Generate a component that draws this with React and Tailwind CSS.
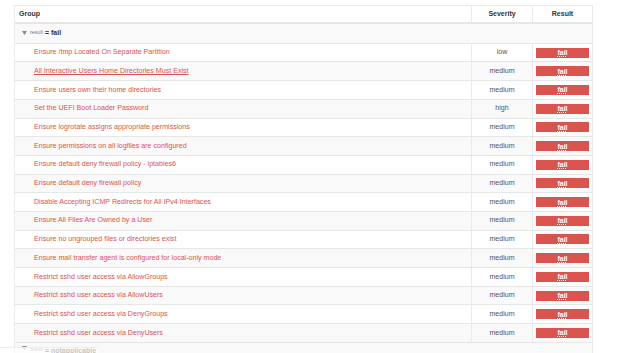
import React from "react";

const rows = [
  ["Ensure /tmp Located On Separate Partition", "low"],
  ["All Interactive Users Home Directories Must Exist", "medium", true],
  ["Ensure users own their home directories", "medium"],
  ["Set the UEFI Boot Loader Password", "high"],
  ["Ensure logrotate assigns appropriate permissions", "medium"],
  ["Ensure permissions on all logfiles are configured", "medium"],
  ["Ensure default deny firewall policy - iptables6", "medium"],
  ["Ensure default deny firewall policy", "medium"],
  ["Disable Accepting ICMP Redirects for All IPv4 Interfaces", "medium"],
  ["Ensure All Files Are Owned by a User", "medium"],
  ["Ensure no ungrouped files or directories exist", "medium"],
  ["Ensure mail transfer agent is configured for local-only mode", "medium"],
  ["Restrict sshd user access via AllowGroups", "medium"],
  ["Restrict sshd user access via AllowUsers", "medium"],
  ["Restrict sshd user access via DenyGroups", "medium"],
  ["Restrict sshd user access via DenyUsers", "medium"],
];

function Caret() {
  return (
    <svg width="5" height="4" viewBox="0 0 5 4" className="mr-[3px]">
      <path d="M0 0 L5 0 L2.5 4 Z" fill="#888" />
    </svg>
  );
}

export default function App() {
  return (
    <div
      className="relative w-[624px] h-[353px] overflow-hidden bg-white pt-[5px] pl-[14px]"
      style={{ fontFamily: '"Liberation Sans", Arial, sans-serif' }}
    >
      <div className="w-[579px] border-x border-t border-[#eaeaea]">
        <div className="grid grid-cols-[456px_61px_60px] h-[18px] border-b-2 border-[#e6e6e6] text-[7px] font-bold text-[#333]">
          <div className="flex items-center pl-[4px]">Group</div>
          <div className="flex items-center justify-center border-l border-[#eaeaea]">Severity</div>
          <div className="flex items-center justify-center border-l border-[#eaeaea]">Result</div>
        </div>
        <div className="h-[18.75px] bg-[#f9f9f9] flex items-center pl-[7px]">
          <Caret />
          <span className="text-[5.3px] text-[#777]">result</span>
          <span className="text-[7px] font-bold text-[#333] ml-[2px]">= fail</span>
        </div>
        {rows.map(([name, sev, hover], i) => (
          <div
            key={i}
            className={
              "grid grid-cols-[456px_61px_60px] h-[18.7px] border-t border-[#e6e6e6] " +
              (i % 2 === 1 ? "bg-[#f9f9f9]" : "bg-white")
            }
          >
            <div className="flex items-center pl-[19px] text-[7.1px] text-[#d9534f]">
              <span className={hover ? "underline" : ""}>{name}</span>
            </div>
            <div className="flex items-center justify-center border-l border-[#eaeaea] text-[7.1px] text-[#555555]">
              {sev}
            </div>
            <div className="flex items-center justify-center border-l border-[#eaeaea]">
              <div className="w-[53px] h-[10px] bg-[#d9534f] flex items-center justify-center">
                <span className="text-[7px] font-bold text-white underline decoration-dotted decoration-[0.5px] underline-offset-1 leading-none">
                  fail
                </span>
              </div>
            </div>
          </div>
        ))}
        <div className="h-[18.75px] border-t border-[#e6e6e6] bg-[#f9f9f9] flex items-start pt-[3px] pl-[7px]">
          <Caret />
          <span className="text-[5.3px] text-[#777]">result</span>
          <span className="text-[7px] font-bold text-[#333] ml-[2px]">= notapplicable</span>
        </div>
      </div>
      <div className="absolute left-0 top-[347px] w-[98px] h-[10px] bg-white/70 border-t border-[#eee]" />
    </div>
  );
}
